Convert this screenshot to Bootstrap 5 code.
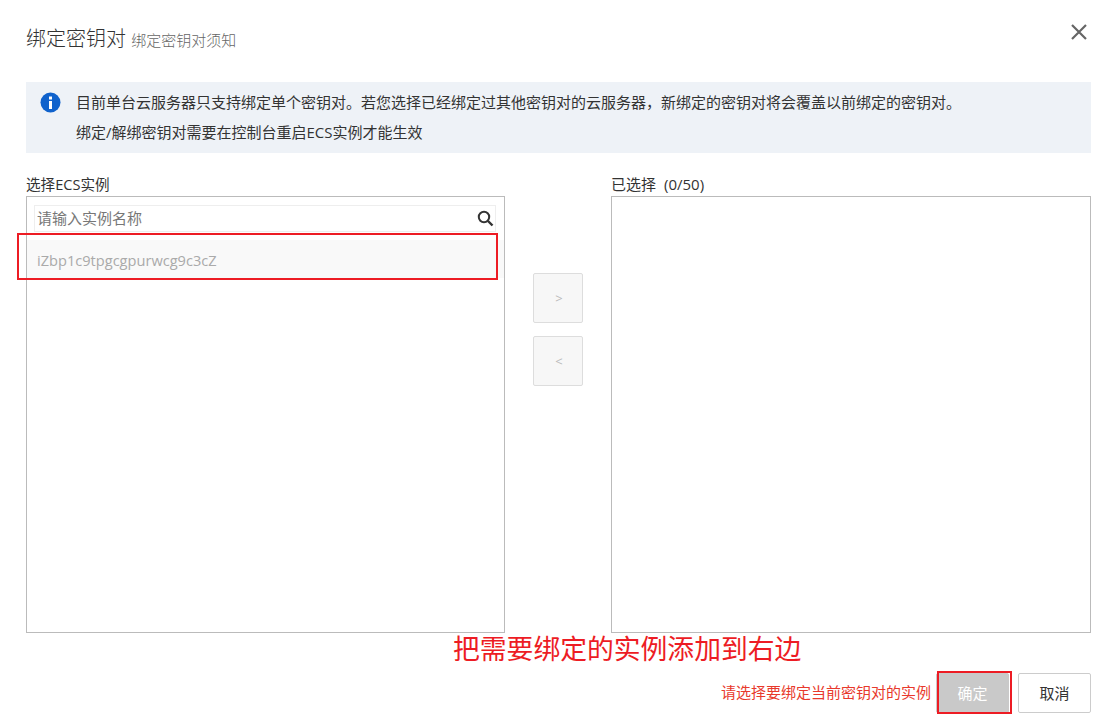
<!DOCTYPE html>
<html lang="zh-CN">
<head>
<meta charset="utf-8">
<title>绑定密钥对</title>
<link rel="stylesheet" href="https://cdn.jsdelivr.net/npm/bootstrap@5.3.0/dist/css/bootstrap.min.css">
<style>
html,body{height:723px;overflow:hidden}
body{background:#fff;color:#333;font-family:"Open Sans","Noto Sans CJK SC",sans-serif;font-size:15px;line-height:20px}
.dlg{position:relative;height:723px;padding:0 15px 0 26px}
.dlg-head{height:82px;padding-top:26px}
.dlg-title{font-size:20px;line-height:26px;color:#333;font-weight:300;margin:0}
.dlg-sub{font-size:15px;color:#666;font-weight:300;margin-left:0}
.dlg-x{position:absolute;right:17px;top:22px;width:20px;height:20px;border:0;background:none;padding:0;display:block}
.dlg-x svg{display:block}
.note{background:#eef2f7;height:71px;padding:10px 14px;gap:15px}
.note p{margin:0;line-height:20px;color:#333;white-space:nowrap}
.note p+p{margin-top:10px}
.note svg{flex:none}
.pane-label{height:43px;padding-top:21px;line-height:20px;color:#333;white-space:nowrap;font-size:14.6px}
.pane-label-wide{font-size:15px}
.pane{height:437px;width:480px;border:1px solid #bbb;background:#fff;padding:8px 8px 0 7px}
.pane-left{width:479px}
.searchbox{height:27px;border:1px solid #eee;padding:0 1px 0 2px}
.searchbox input{border:0;outline:0;flex:1;font:inherit;color:#333;background:none;padding:0 0 2px;min-width:0}
.searchbox input::placeholder{color:#777;opacity:1}
.entry{height:38px;margin:8px -8px 0 -7px;background:#f9f9f9;color:#aaa;line-height:40px;padding-left:10px;font-size:14.6px}
.mid{width:106px;padding-top:77px;gap:13px;margin-top:43px}
.arrow-btn{width:50px;height:50px;background:#f7f7f7;border:1px solid #ddd;border-radius:2px;color:#bbb;font-size:13px;padding:0 0 0 2px;line-height:48px}
.redmark{position:absolute;border:2px solid #ed1c24;pointer-events:none}
.mark-row{left:17px;top:233px;width:481px;height:47px}
.mark-ok{left:937px;top:671px;width:75px;height:43px}
.callout{color:#ed1c24;font-size:26.8px;line-height:32px;height:34px;padding-left:427px;white-space:nowrap}
.foot{margin-top:6px;height:40px}
.foot-tip{color:#e8392c;margin-right:5px;margin-bottom:2px;white-space:nowrap}
.btn-ok,.btn-ok:disabled{width:73px;height:40px;background:#c9c9c9;border:1px solid #c9c9c9;border-radius:2px;color:#fff;font-size:15px;padding:0;opacity:1;margin-right:9px}
.btn-cancel{width:73px;height:40px;background:#fff;border:1px solid #ccc;border-radius:2px;color:#333;font-size:15px;padding:0}
</style>
</head>
<body>
<div class="dlg">
  <div class="dlg-head">
    <h5 class="dlg-title">绑定密钥对 <span class="dlg-sub">绑定密钥对须知</span></h5>
  </div>
  <button class="dlg-x" type="button" aria-label="关闭">
    <svg width="20" height="20" viewBox="0 0 20 20"><path d="M3 3L17 17M17 3L3 17" stroke="#666" stroke-width="2.2" fill="none"/></svg>
  </button>
  <div class="note d-flex">
    <svg width="21" height="21" viewBox="0 0 21 21"><circle cx="10.5" cy="10.5" r="10" fill="#0f62cc"/><rect x="9" y="9" width="3" height="8" fill="#fff"/><rect x="9" y="4.5" width="3" height="3" fill="#fff"/></svg>
    <div>
      <p>目前单台云服务器只支持绑定单个密钥对。若您选择已经绑定过其他密钥对的云服务器，新绑定的密钥对将会覆盖以前绑定的密钥对。</p>
      <p>绑定/解绑密钥对需要在控制台重启ECS实例才能生效</p>
    </div>
  </div>
  <div class="d-flex">
    <div>
      <div class="pane-label">选择ECS实例</div>
      <div class="pane pane-left">
        <div class="searchbox d-flex align-items-center">
          <input type="text" placeholder="请输入实例名称">
          <svg width="17" height="17" viewBox="0 0 17 17"><circle cx="7" cy="7" r="5.2" fill="none" stroke="#333" stroke-width="2"/><path d="M11 11L15.5 15.5" stroke="#333" stroke-width="2.4"/></svg>
        </div>
        <div class="entry">iZbp1c9tpgcgpurwcg9c3cZ</div>
      </div>
    </div>
    <div class="mid d-flex flex-column align-items-center flex-shrink-0">
      <button class="arrow-btn" type="button" disabled>&gt;</button>
      <button class="arrow-btn" type="button" disabled>&lt;</button>
    </div>
    <div>
      <div class="pane-label pane-label-wide">已选择<span class="ms-2">(0/50)</span></div>
      <div class="pane"></div>
    </div>
  </div>
  <div class="callout">把需要绑定的实例添加到右边</div>
  <div class="foot d-flex justify-content-end align-items-center">
    <span class="foot-tip">请选择要绑定当前密钥对的实例</span>
    <button class="btn btn-ok" type="button" disabled>确定</button>
    <button class="btn btn-cancel" type="button">取消</button>
  </div>
  <div class="redmark mark-row"></div>
  <div class="redmark mark-ok"></div>
</div>
<script src="https://cdn.jsdelivr.net/npm/bootstrap@5.3.0/dist/js/bootstrap.bundle.min.js"></script>
</body>
</html>
